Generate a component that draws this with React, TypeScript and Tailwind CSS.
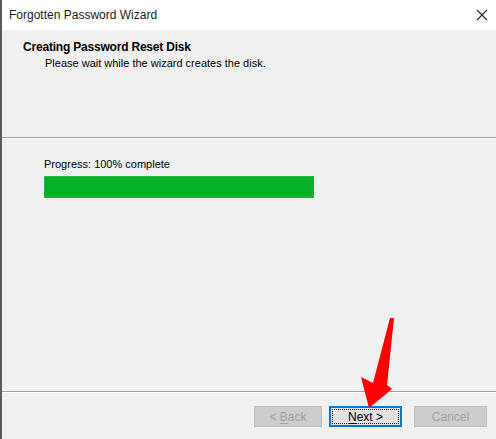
const font = { fontFamily: '"Liberation Sans", Arial, sans-serif' };

function WizardButton({
  label,
  underline,
  disabled,
  focused,
  width,
}: {
  label: string;
  underline: number;
  disabled?: boolean;
  focused?: boolean;
  width: string;
}) {
  const text =
    underline < 0 ? (
      <span>{label}</span>
    ) : (
      <span className="whitespace-pre">
        {label.slice(0, underline)}
        <span className="underline underline-offset-2">{label[underline]}</span>
        {label.slice(underline + 1)}
      </span>
    );
  if (focused) {
    return (
      <div className={`${width} flex h-[21px] items-center justify-center border-2 border-[#0078d7] bg-[#e1e1e1] p-px`}>
        <div className="flex h-full w-full items-center justify-center border border-dotted border-[#1a1a1a] text-[12px] text-black">
          {text}
        </div>
      </div>
    );
  }
  return (
    <div
      className={`${width} flex h-[21px] items-center justify-center border border-[#bfbfbf] bg-[#cccccc] text-[12px] ${
        disabled ? "text-[#a0a0a0]" : "text-black"
      }`}
    >
      {text}
    </div>
  );
}

export default function App() {
  return (
    <div
      className="relative flex h-[439px] w-[496px] flex-col overflow-hidden border-l-2 border-[#5a5a5a] bg-[#f0f0f0] text-black"
      style={font}
    >
      {/* title bar */}
      <div className="flex h-[30px] shrink-0 items-center justify-between bg-white pb-[1px] pl-[7px] pr-[7px]">
        <span className="text-[12px] text-[#1a1a1a]">Forgotten Password Wizard</span>
        <svg width="12" height="12" viewBox="0 0 12 12" className="mr-[1px]">
          <path d="M1 1 L11 11 M11 1 L1 11" stroke="#222" strokeWidth="1.1" />
        </svg>
      </div>

      {/* header */}
      <div className="h-[107px] shrink-0 pl-[21px] pt-[10px]">
        <div className="text-[12px] font-bold leading-[14px] tracking-[-0.2px]">
          Creating Password Reset Disk
        </div>
        <div className="pl-[22px] pt-[2px] text-[11px] leading-[14px]">
          Please wait while the wizard creates the disk.
        </div>
      </div>
      <div className="h-px shrink-0 bg-[#a0a0a0]" />
      <div className="h-px shrink-0 bg-white" />

      {/* body */}
      <div className="flex-1 pl-[42px] pt-[18px]">
        <div className="text-[11px] leading-[14px]">Progress: 100% complete</div>
        <div className="mt-[5px] h-[22px] w-[270px] border border-[#28b43c] bg-[#06b025]" />
      </div>

      <div className="h-px shrink-0 bg-[#a0a0a0]" />
      <div className="h-px shrink-0 bg-white" />

      {/* buttons */}
      <div className="flex h-[46px] shrink-0 items-start pl-[252px] pt-[13px]">
        <WizardButton label="< Back" underline={2} disabled width="w-[68px]" />
        <div className="ml-[7px]">
          <WizardButton label="Next >" underline={0} focused width="w-[73px]" />
        </div>
        <div className="ml-[12px]">
          <WizardButton label="Cancel" underline={-1} disabled width="w-[73px]" />
        </div>
      </div>

      {/* red annotation arrow */}
      <svg className="absolute left-0 top-0" width="496" height="439" viewBox="0 0 496 439">
        <polygon
          points="392,318 385,385 390,389 367,408 359,377 371,383 388,318"
          fill="#ff0000"
        />
      </svg>
    </div>
  );
}
